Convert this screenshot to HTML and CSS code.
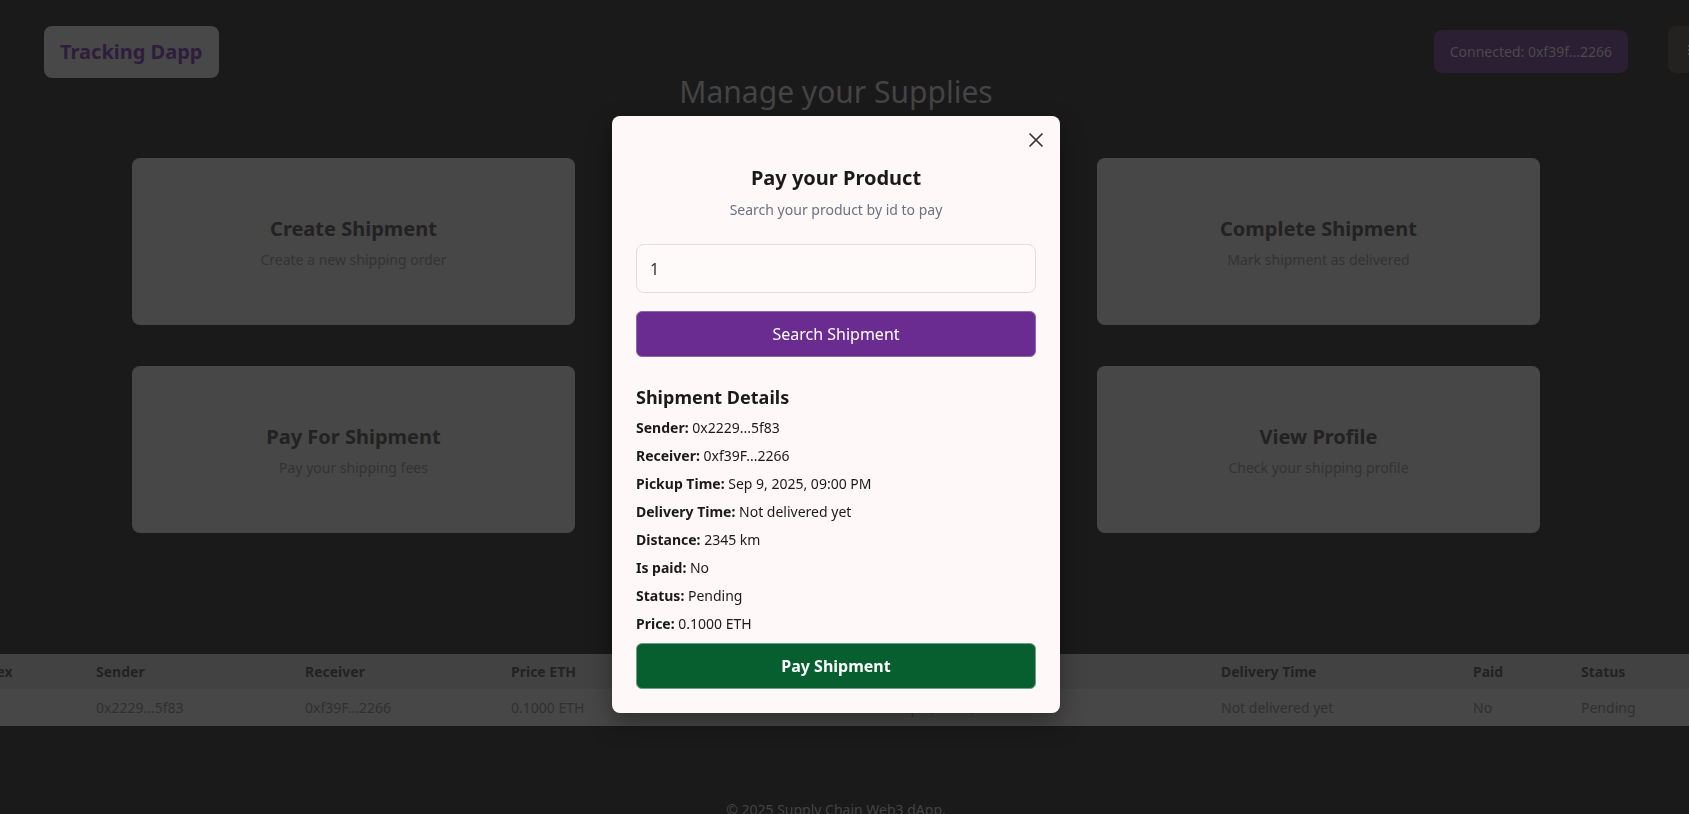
FILE: index.html
```html
<!DOCTYPE html>
<html lang="en">
<head>
<meta charset="utf-8">
<title>Tracking Dapp</title>
<link rel="stylesheet" href="styles.css">
</head>
<body>
<div class="page">
  <header class="header">
    <div class="logo">Tracking Dapp</div>
    <div class="header-right">
      <div class="connected">Connected: 0xf39f...2266</div>
      <button class="menu-btn" aria-label="menu">
        <svg width="14" height="14" viewBox="0 0 14 14"><path d="M1 3h12M1 7h12M1 11h12" stroke="#555" stroke-width="1.6" fill="none"/></svg>
      </button>
    </div>
  </header>

  <h1 class="page-title">Manage your Supplies</h1>

  <section class="cards">
    <div class="card"><h2>Create Shipment</h2><p>Create a new shipping order</p></div>
    <div class="card"><h2>Get Shipment</h2><p>Get details of a shipment</p></div>
    <div class="card"><h2>Complete Shipment</h2><p>Mark shipment as delivered</p></div>
    <div class="card"><h2>Pay For Shipment</h2><p>Pay your shipping fees</p></div>
    <div class="card"><h2>Start Shipment</h2><p>Start a pending shipment</p></div>
    <div class="card"><h2>View Profile</h2><p>Check your shipping profile</p></div>
  </section>

  <section class="table-wrap">
    <table class="ship-table">
      <colgroup>
        <col class="c-index"><col class="c-sender"><col class="c-receiver"><col class="c-price"><col class="c-distance"><col class="c-pickup"><col class="c-delivery"><col class="c-paid"><col class="c-status">
      </colgroup>
      <thead>
        <tr><th>Index</th><th>Sender</th><th>Receiver</th><th>Price ETH</th><th>Distance</th><th>Pickup Time</th><th>Delivery Time</th><th>Paid</th><th>Status</th></tr>
      </thead>
      <tbody>
        <tr><td>1</td><td>0x2229...5f83</td><td>0xf39F...2266</td><td>0.1000 ETH</td><td>2345 km</td><td>Sep 9, 2025, 09:00 PM</td><td>Not delivered yet</td><td>No</td><td>Pending</td></tr>
      </tbody>
    </table>
  </section>

  <footer class="footer">© 2025 Supply Chain Web3 dApp.</footer>
</div>

<div class="overlay">
  <div class="modal">
    <button class="close" aria-label="close">
      <svg width="16" height="16" viewBox="0 0 16 16"><path d="M2 2L14 14M14 2L2 14" stroke="#333" stroke-width="1.7" stroke-linecap="round"/></svg>
    </button>
    <h2 class="modal-title">Pay your Product</h2>
    <p class="modal-sub">Search your product by id to pay</p>
    <input class="modal-input" type="text" value="1">
    <button class="btn btn-search">Search Shipment</button>
    <h3 class="details-title">Shipment Details</h3>
    <ul class="details">
      <li><b>Sender:</b> 0x2229...5f83</li>
      <li><b>Receiver:</b> 0xf39F...2266</li>
      <li><b>Pickup Time:</b> Sep 9, 2025, 09:00 PM</li>
      <li><b>Delivery Time:</b> Not delivered yet</li>
      <li><b>Distance:</b> 2345 km</li>
      <li><b>Is paid:</b> No</li>
      <li><b>Status:</b> Pending</li>
      <li><b>Price:</b> 0.1000 ETH</li>
    </ul>
    <button class="btn btn-pay">Pay Shipment</button>
  </div>
</div>
</body>
</html>
```

FILE: styles.css
```css
* { box-sizing: border-box; }

html, body {
  margin: 0;
  padding: 0;
  background: #1a1a1a;
  font-family: "Noto Sans", "Open Sans", sans-serif;
  overflow: hidden;
  width: 1689px;
  height: 814px;
}

.page {
  width: 1672px;
}

.header {
  display: flex;
  align-items: flex-start;
  width: 1715px;
  padding: 26px 0 0 44px;
  height: 78px;
}

.logo {
  background: #484848;
  color: #2e1d3c;
  font-weight: 700;
  font-size: 20px;
  line-height: 52px;
  height: 52px;
  padding: 0 16px;
  border-radius: 8px;
}

.header-right {
  margin-left: auto;
  display: flex;
  align-items: flex-start;
  gap: 40px;
}

.connected {
  margin-top: 4px;
  background: #2b1f33;
  color: #4a4a4a;
  font-size: 14px;
  height: 43px;
  line-height: 43px;
  padding: 0 16px;
  border-radius: 8px;
}

.menu-btn {
  width: 47px;
  height: 47px;
  border: none;
  border-radius: 8px;
  background: #242220;
  padding: 0 0 0 19px;
  display: flex;
  align-items: center;
}

.page-title {
  margin: -1px 0 0;
  text-align: center;
  font-size: 30px;
  line-height: 30px;
  font-weight: 400;
  color: #444;
}

.cards {
  margin: 51px auto 0;
  width: 1408px;
  display: grid;
  grid-template-columns: repeat(3, 443px);
  column-gap: 39.5px;
  row-gap: 41px;
}

.card {
  background: #474747;
  border-radius: 8px;
  height: 167px;
  display: flex;
  flex-direction: column;
  align-items: center;
  justify-content: center;
  padding-top: 2px;
}

.card h2 {
  margin: 0;
  font-size: 20px;
  line-height: 28px;
  font-weight: 700;
  color: #222;
}

.card p {
  margin: 7px 0 0;
  font-size: 14px;
  line-height: 20px;
  color: #333;
}

.table-wrap {
  margin-top: 121px;
  display: flex;
  justify-content: center;
}

.ship-table {
  flex: none;
  width: 1758px;
  border-collapse: collapse;
  table-layout: fixed;
  font-size: 14px;
}

.c-index { width: 123px; }
.c-sender { width: 209px; }
.c-receiver { width: 206px; }
.c-price { width: 200px; }
.c-distance { width: 184px; }
.c-pickup { width: 326px; }
.c-delivery { width: 252px; }
.c-paid { width: 108px; }
.c-status { width: 150px; }

.ship-table th,
.ship-table td {
  text-align: left;
  padding: 0 16px;
  white-space: nowrap;
}

.ship-table th {
  background: #424242;
  color: #222;
  font-weight: 700;
  height: 35px;
}

.ship-table td {
  background: #474747;
  color: #303030;
  height: 37px;
}

.footer {
  margin-top: 74px;
  text-align: center;
  font-size: 14px;
  color: #444;
  line-height: 20px;
}

/* Modal */
.overlay {
  position: fixed;
  top: 0;
  left: 0;
  width: 1672px;
  height: 814px;
  display: flex;
  justify-content: center;
  align-items: flex-start;
  padding-top: 116px;
}

.modal {
  position: relative;
  width: 448px;
  background: #fff8f8;
  border-radius: 8px;
  padding: 24px;
  box-shadow: 0 10px 25px rgba(0, 0, 0, 0.35);
  display: flex;
  flex-direction: column;
}

.close {
  position: absolute;
  top: 16px;
  right: 16px;
  width: 16px;
  height: 16px;
  padding: 0;
  margin: 0;
  border: none;
  background: none;
}

.modal-title {
  margin: 24px 0 0;
  text-align: center;
  font-size: 20px;
  line-height: 28px;
  font-weight: 700;
  color: #1a1a1a;
}

.modal-sub {
  margin: 8px 0 0;
  text-align: center;
  font-size: 14px;
  line-height: 20px;
  color: #6b7280;
}

.modal-input {
  margin-top: 24px;
  height: 49px;
  width: 100%;
  border: 1px solid #e3dfe1;
  border-radius: 8px;
  background: #fffafa;
  padding: 0 13px;
  font-family: inherit;
  font-size: 16px;
  color: #333;
  outline: none;
}

.btn {
  width: 100%;
  height: 46px;
  border: 1px solid #ddd;
  border-radius: 6px;
  color: #fff;
  font-family: inherit;
  font-size: 16px;
  cursor: pointer;
}

.btn-search {
  margin-top: 18px;
  background: #6b2c91;
  font-weight: 400;
  border-color: #8d6aa6;
}

.details-title {
  margin: 28px 0 0;
  font-size: 18px;
  line-height: 24px;
  font-weight: 700;
  color: #1a1a1a;
}

.details {
  list-style: none;
  margin: 9px 0 0;
  padding: 0;
}

.details li {
  font-size: 14px;
  line-height: 20px;
  color: #1a1a1a;
  margin-bottom: 8px;
}

.details li:last-child {
  margin-bottom: 0;
}

.details b {
  font-weight: 700;
}

.btn-pay {
  margin-top: 9px;
  background: #075e2f;
  font-weight: 700;
  border-color: #6f9e82;
}
```
